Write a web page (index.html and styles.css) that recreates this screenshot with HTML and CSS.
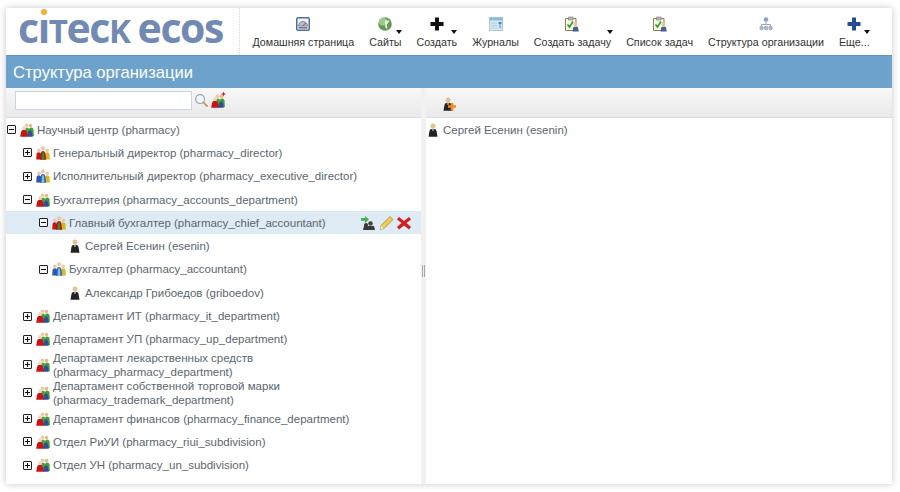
FILE: index.html
```html
<!DOCTYPE html>
<html lang="ru">
<head>
<meta charset="utf-8">
<title>Структура организации</title>
<link rel="stylesheet" href="styles.css">
</head>
<body>
<svg class="defs" width="0" height="0" aria-hidden="true">
  <defs>
    <symbol id="group-red" viewBox="0 0 14 14">
      <circle cx="6.500" cy="2.300" r="1.800" fill="#e9c8a2"/><circle cx="10.500" cy="2.500" r="1.800" fill="#e4b98a"/><circle cx="4" cy="5" r="1.800" fill="#efd6b6"/>
      <path d="M9 13V6.500q0-2 2-2t2.500 2l.4 6.500z" fill="#3f9a3a"/>
      <path d="M5.500 13V6q0-1.500 1.500-1.500T9 6v7z" fill="#4fa03c"/>
      <path d="M7 13.800 8 9.500q.5-2 2-2t2 2l.8 4.300z" fill="#2a4f9f"/>
      <path d="M.2 13.800 1 9q.4-2.200 3-2.200T7 9l1 4.800z" fill="#c71515"/>
    </symbol>
    <symbol id="group-yellow" viewBox="0 0 14 14">
      <circle cx="7" cy="2.300" r="2" fill="#e9c8a2"/><circle cx="11.200" cy="4.300" r="1.800" fill="#e9c8a2"/><circle cx="2.800" cy="4.300" r="1.800" fill="#e9c8a2"/>
      <path d="M9 13.500V8q0-1.800 2.200-1.800T13.500 8l.4 5.500z" fill="#dcb522"/>
      <path d="M.2 13.500.6 8q.2-1.800 2.200-1.800T5 8v5.500z" fill="#c71515"/>
      <path d="M3.800 13.800 4.800 7q.3-2 2.200-2t2.200 2l1 6.800z" fill="#b41616"/>
      <path d="M6 6.500h2l.4 7.300H5.600z" fill="#2f8f2e"/>
    </symbol>
    <symbol id="group-blue" viewBox="0 0 14 14">
      <circle cx="7" cy="2.300" r="2" fill="#e9c8a2"/><circle cx="11.200" cy="4.300" r="1.800" fill="#e9c8a2"/><circle cx="2.800" cy="4.300" r="1.800" fill="#e9c8a2"/>
      <path d="M9 13.500V8q0-1.800 2.200-1.800T13.500 8l.4 5.500z" fill="#dcb522"/>
      <path d="M.2 13.500.6 8q.2-1.800 2.200-1.800T5 8v5.500z" fill="#2b57a8"/>
      <path d="M3.800 13.800 4.800 7q.3-2 2.200-2t2.200 2l1 6.800z" fill="#2c62b8"/>
      <path d="M6 6.500h2l.4 7.300H5.600z" fill="#86bbe6"/>
    </symbol>
    <symbol id="person" viewBox="0 0 14 14">
      <circle cx="7" cy="3" r="2.500" fill="#e3c39a"/><path d="M2.500 13.800 3.500 8q.4-2.200 3.500-2.200T10.500 8l1 5.800z" fill="#232323"/><path d="M6.300 5.800h1.400L7.400 8H6.600z" fill="#ddd"/>
    </symbol>
    <symbol id="plus" viewBox="0 0 14 14"><path d="M5 0.500h4v4.500h4.500v4H9v4.500H5V9H.5V5H5z"/></symbol>
    <symbol id="task" viewBox="0 0 16 16">
      <path d="M1.500 2.500h10.500v12H1.500z" fill="#fbf6e6" stroke="#8d7b52"/><path d="M4.500 1h4.500v3H4.500z" fill="#b9b9b9" stroke="#777" stroke-width=".6"/>
      <path d="M3.500 8.500 5.500 11 9 5.500" fill="none" stroke="#2ea32e" stroke-width="1.700"/>
      <circle cx="11.500" cy="8.500" r="2" fill="#e6c49c"/><path d="M8.500 15.500 9.300 11h4.500l1 4.500z" fill="#46608f"/>
    </symbol>
  </defs>
</svg>

<main class="window">
  <header class="top">
    <div class="logo">c<span class="logo-i">ı</span><span class="sc">t</span>ec<span class="sc">k</span><span class="logo-gap">ecos</span></div>
    <nav class="menu">
      <a class="menu-item">
        <svg class="mi" viewBox="0 0 16 16"><rect x="1" y="1" width="14" height="14" rx="2" fill="#4f6f9c"/><rect x="2.500" y="2.500" width="11" height="11" fill="#f2f3f3"/><path d="M3.500 10a4.500 4.500 0 0 1 9 0z" fill="#b9c3cf" stroke="#58657a" stroke-width=".7"/><path d="M8 10l2.500-3" stroke="#c33"/><rect x="3.500" y="11" width="9" height="1.600" fill="#6a7890"/></svg>
        <span>Домашняя страница</span>
      </a>
      <a class="menu-item caret">
        <svg class="mi" viewBox="0 0 16 16"><circle cx="8" cy="8" r="6.800" fill="#5f9c52"/><circle cx="6" cy="5.500" r="4" fill="#b3cfa5" opacity=".8"/><path d="M8 4.500h4.500L10 8.500l.3 4.500-2-1.500z" fill="#e8f1e2"/></svg>
        <span>Сайты</span>
      </a>
      <a class="menu-item caret">
        <svg class="mi mi-black" viewBox="0 0 14 14"><use href="#plus"/></svg>
        <span>Создать</span>
      </a>
      <a class="menu-item">
        <svg class="mi" viewBox="0 0 16 16"><rect x="1.500" y="1.500" width="13" height="13" fill="#d4e6f2" stroke="#a9c6da"/><rect x="1.500" y="1.500" width="13" height="3" fill="#8dbbd8"/><path d="M3 7h6M3 9.500h6M3 12h6" stroke="#b3cfe1"/><path d="M10.500 6h3v2h-1v4h-1V8h-1z" fill="#4d84ad"/></svg>
        <span>Журналы</span>
      </a>
      <a class="menu-item caret caret-wide">
        <svg class="mi" viewBox="0 0 16 16"><use href="#task"/></svg>
        <span>Создать задачу</span>
      </a>
      <a class="menu-item">
        <svg class="mi" viewBox="0 0 16 16"><use href="#task"/></svg>
        <span>Список задач</span>
      </a>
      <a class="menu-item">
        <svg class="mi" viewBox="0 0 16 16"><circle cx="8" cy="3.500" r="2.300" fill="#8ea3bf"/><path d="M8 5v3M3.500 11V8.500h9V11" fill="none" stroke="#9aa8ba"/><circle cx="3.500" cy="12" r="2.200" fill="#a5b4c7"/><circle cx="8" cy="12" r="2.200" fill="#a5b4c7"/><circle cx="12.500" cy="12" r="2.200" fill="#a5b4c7"/></svg>
        <span>Структура организации</span>
      </a>
      <a class="menu-item caret">
        <svg class="mi mi-blue" viewBox="0 0 14 14"><use href="#plus"/></svg>
        <span>Еще...</span>
      </a>
    </nav>
  </header>

  <h1 class="title">Структура организации</h1>

  <div class="panes">
    <section class="pane-left">
      <div class="bar">
        <input class="search" type="text" aria-label="Поиск">
        <svg class="bar-ico" viewBox="0 0 16 16"><circle cx="6.500" cy="6.500" r="4.700" fill="#f1f6fa" stroke="#9aa7b2" stroke-width="1.300"/><path d="M10 10l4.500 4.500" stroke="#c49a4f" stroke-width="2"/></svg>
        <span class="bar-add">
          <svg class="ico"><use href="#group-red"/></svg>
          <i class="star"></i>
        </span>
      </div>
      <ul class="tree">
        <li class="row l0"><b class="tog minus"></b><svg class="ico"><use href="#group-red"/></svg><span>Научный центр (pharmacy)</span></li>
        <li class="row l1"><b class="tog"></b><svg class="ico"><use href="#group-yellow"/></svg><span>Генеральный директор (pharmacy_director)</span></li>
        <li class="row l1"><b class="tog"></b><svg class="ico"><use href="#group-blue"/></svg><span>Исполнительный директор (pharmacy_executive_director)</span></li>
        <li class="row l1"><b class="tog minus"></b><svg class="ico"><use href="#group-red"/></svg><span>Бухгалтерия (pharmacy_accounts_department)</span></li>
        <li class="row l2 selected"><b class="tog minus"></b><svg class="ico"><use href="#group-yellow"/></svg><span>Главный бухгалтер (pharmacy_chief_accountant)</span>
          <span class="actions">
            <svg class="act" viewBox="0 0 16 16"><circle cx="6" cy="10" r="2" fill="#333"/><path d="M3 15l1-4h10l1 4z" fill="#3b3b3b"/><circle cx="10.500" cy="8.500" r="2.300" fill="#444"/><path d="M1 3h4V1l4 3.500L5 8V5.800H1z" fill="#47b04a"/></svg>
            <svg class="act" viewBox="0 0 16 16"><path d="M12 1.500l3 3L6 13.500l-4 1 1-4z" fill="#efcb4f" stroke="#9b8a4f" stroke-width=".8"/><path d="M3 10.500l3 3-4 1z" fill="#f1e3c0"/></svg>
            <svg class="act" viewBox="0 0 16 16"><path d="M3 2l5 4 5-4 2 2.500L10.500 8l4.500 4-2 2.500-5-4-5 4-2-2.500 4.500-4L1 4.500z" fill="#cf1f1f"/></svg>
          </span>
        </li>
        <li class="row l3"><svg class="ico"><use href="#person"/></svg><span>Сергей Есенин (esenin)</span></li>
        <li class="row l2"><b class="tog minus"></b><svg class="ico"><use href="#group-blue"/></svg><span>Бухгалтер (pharmacy_accountant)</span></li>
        <li class="row l3"><svg class="ico"><use href="#person"/></svg><span>Александр Грибоедов (griboedov)</span></li>
        <li class="row l1"><b class="tog"></b><svg class="ico"><use href="#group-red"/></svg><span>Департамент ИТ (pharmacy_it_department)</span></li>
        <li class="row l1"><b class="tog"></b><svg class="ico"><use href="#group-red"/></svg><span>Департамент УП (pharmacy_up_department)</span></li>
        <li class="row l1 two"><b class="tog"></b><svg class="ico"><use href="#group-red"/></svg><span>Департамент лекарственных средств<br>(pharmacy_pharmacy_department)</span></li>
        <li class="row l1 two"><b class="tog"></b><svg class="ico"><use href="#group-red"/></svg><span>Департамент собственной торговой марки<br>(pharmacy_trademark_department)</span></li>
        <li class="row l1"><b class="tog"></b><svg class="ico"><use href="#group-red"/></svg><span>Департамент финансов (pharmacy_finance_department)</span></li>
        <li class="row l1"><b class="tog"></b><svg class="ico"><use href="#group-red"/></svg><span>Отдел РиУИ (pharmacy_riui_subdivision)</span></li>
        <li class="row l1"><b class="tog"></b><svg class="ico"><use href="#group-red"/></svg><span>Отдел УН (pharmacy_un_subdivision)</span></li>
      </ul>
    </section>
    <div class="splitter"><i class="grip"></i></div>
    <section class="pane-right">
      <div class="bar bar-right">
        <span class="bar-add">
          <svg class="ico"><use href="#person"/></svg>
          <i class="orange-plus"></i>
        </span>
      </div>
      <div class="row l-right"><svg class="ico"><use href="#person"/></svg><span>Сергей Есенин (esenin)</span></div>
    </section>
  </div>
</main>
</body>
</html>
```

FILE: styles.css
```css
* { box-sizing: border-box; }

html, body { height: 100%; }

body {
  margin: 0;
  background: #fff;
  font-family: "Liberation Sans", Arial, sans-serif;
  overflow: hidden;
}

.defs { position: absolute; }

.window {
  margin: 8px 8px 0 6px;
  height: 476px;
  background: #fff;
  box-shadow: 0 0 7px rgba(0, 0, 0, .22);
  display: flex;
  flex-direction: column;
}

/* top bar */
.top {
  height: 47px;
  flex: none;
  display: flex;
  align-items: stretch;
}

.logo {
  width: 234px;
  flex: none;
  padding-left: 12px;
  border-right: 1px dotted #d8d8d8;
  color: #7189b3;
  font-family: "Open Sans", sans-serif;
  font-weight: 700;
  font-size: 41px;
  line-height: 39px;
  letter-spacing: -1.400px;
  white-space: nowrap;
}

.logo-i {
  position: relative;
  display: inline-block;
}

.logo-i::before {
  content: "";
  position: absolute;
  left: 3px;
  top: 1px;
  width: 6px;
  height: 6px;
  border-radius: 50%;
  background: #eeb136;
}

.sc { font-size: 33px; text-transform: uppercase; }
.logo-gap { margin-left: 8px; }

.menu {
  display: flex;
  gap: 15px;
  padding-left: 12.500px;
}

.menu-item {
  position: relative;
  display: flex;
  flex-direction: column;
  align-items: center;
  padding-top: 8px;
  color: #333;
  font-size: 10.700px;
  line-height: 13px;
  white-space: nowrap;
}

.mi { width: 16px; height: 16px; margin-bottom: 4px; }
.mi-black { fill: #111; width: 14px; }
.mi-blue { fill: #234f8d; width: 14px; }

.caret::after {
  content: "";
  position: absolute;
  top: 22px;
  right: 0;
  border: 3px solid transparent;
  border-top: 4px solid #111;
  border-bottom: 0;
}

.caret-wide::after { right: -2px; }

/* title */
.title {
  margin: 0;
  height: 33px;
  flex: none;
  padding-left: 7px;
  background: #6ca2cc;
  color: #fff;
  font-size: 16.600px;
  font-weight: 400;
  line-height: 33px;
  border-top: 1px solid #5d93bd;
}

/* panes */
.panes {
  flex: 1;
  min-height: 0;
  display: flex;
}

.pane-left {
  width: 415px;
  flex: none;
}

.splitter {
  width: 5px;
  flex: none;
  background: #f1f1f1;
  display: flex;
  align-items: center;
  justify-content: center;
  padding-bottom: 31px;
}

.grip {
  width: 3px;
  height: 12px;
  background: repeating-linear-gradient(90deg, #a9a9a9 0 1px, #eee 1px 2px);
}

.pane-right {
  flex: 1;
  min-width: 0;
}

.bar {
  height: 30px;
  display: flex;
  align-items: center;
  gap: 2px;
  padding: 0 0 4px 9px;
  background: linear-gradient(#f8f8f8, #e9e9e9);
  border-bottom: 1px solid #dcdcdc;
}

.bar-right { padding-left: 15px; padding-top: 2px; padding-bottom: 0; }

.search {
  width: 177px;
  height: 19px;
  margin: 0;
  padding: 0;
  border: 1px solid #c8d6e4;
  background: #fff;
}

.bar-ico { width: 15px; height: 15px; }

.bar-add { position: relative; display: block; width: 14px; height: 14px; }

.star {
  position: absolute;
  right: -1px;
  top: -2px;
  width: 5px;
  height: 5px;
  background: #d9232e;
  clip-path: polygon(50% 0, 65% 35%, 100% 50%, 65% 65%, 50% 100%, 35% 65%, 0 50%, 35% 35%);
}

.orange-plus {
  position: absolute;
  right: -1px;
  bottom: 0;
  width: 8px;
  height: 8px;
  background: #ef8a1d;
  clip-path: polygon(33% 0, 67% 0, 67% 33%, 100% 33%, 100% 67%, 67% 67%, 67% 100%, 33% 100%, 33% 67%, 0 67%, 0 33%, 33% 33%);
}

/* tree */
.tree {
  margin: 0;
  padding: 0;
  list-style: none;
}

.row {
  position: relative;
  display: flex;
  align-items: center;
  height: 23.300px;
  color: #5b6670;
  font-size: 11.500px;
  line-height: 14px;
  white-space: nowrap;
}

.two { height: 28px; }

.l0 { padding-left: 1px; }
.l1 { padding-left: 17px; }
.l2 { padding-left: 33px; }
.l3 { padding-left: 62px; }
.l-right { padding-left: 0; }

.selected { background: #deeaf4; }

.tog {
  position: relative;
  flex: none;
  width: 9px;
  height: 9px;
  margin-right: 4px;
  border: 1px solid #222;
  border-radius: 1px;
  background: #f4f4f4;
}

.tog::before {
  content: "";
  position: absolute;
  left: 1px;
  top: 3px;
  width: 5px;
  height: 1px;
  background: #111;
}

.tog::after {
  content: "";
  position: absolute;
  left: 3px;
  top: 1px;
  width: 1px;
  height: 5px;
  background: #111;
}

.tog.minus::after { display: none; }

.ico {
  flex: none;
  display: block;
  width: 14px;
  height: 14px;
  margin-right: 3px;
}

.bar .ico { margin: 0; }

.actions {
  position: absolute;
  left: 354px;
  top: 4px;
  display: flex;
  gap: 2px;
}

.act { width: 16px; height: 16px; }
```
